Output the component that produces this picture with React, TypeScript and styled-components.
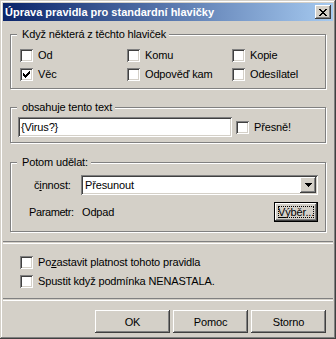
import * as React from 'react';
import styled, { createGlobalStyle } from 'styled-components';

const face = '#D4D0C8';
const shadow = '#808080';
const dark = '#404040';

const GlobalStyle = createGlobalStyle`
  html, body {
    margin: 0;
    padding: 0;
    background: ${face};
  }
  body {
    font-family: "Liberation Sans", Arial, sans-serif;
    font-size: 11px;
    letter-spacing: -0.15px;
    color: #000;
  }
`;

const raised = `
  box-shadow: inset -1px -1px ${dark}, inset 1px 1px #fff,
    inset -2px -2px ${shadow}, inset 2px 2px ${face};
`;

const sunken = `
  box-shadow: inset 1px 1px ${shadow}, inset -1px -1px #fff,
    inset 2px 2px ${dark}, inset -2px -2px ${face};
`;

export default () => {
  return (
    <>
      <GlobalStyle />
      <Window>
        <TitleBar>
          <Title>Úprava pravidla pro standardní hlavičky</Title>
          <CloseButton>
            <svg width="8" height="7" viewBox="0 0 8 7" shapeRendering="crispEdges">
              <path
                d="M0 0h2v1H0zM6 0h2v1H6zM1 1h2v1H1zM5 1h2v1H5zM2 2h4v1H2zM3 3h2v1H3zM2 4h4v1H2zM1 5h2v1H1zM5 5h2v1H5zM0 6h2v1H0zM6 6h2v1H6z"
                fill="#000"
              />
            </svg>
          </CloseButton>
        </TitleBar>

        <Groups>
          <Group>
            <Legend>Když některá z těchto hlaviček</Legend>
            <HeaderGrid>
              <Check label="Od" />
              <Check label="Komu" />
              <Check label="Kopie" />
              <Check label="Věc" checked />
              <Check label="Odpověď kam" />
              <Check label="Odesílatel" />
            </HeaderGrid>
          </Group>

          <Group $top={12}>
            <Legend>obsahuje tento text</Legend>
            <TextRow>
              <Edit>{'{Virus?}'}</Edit>
              <Check label="Přesně!" />
            </TextRow>
          </Group>

          <Group $top={13}>
            <Legend>Potom udělat:</Legend>
            <ActionBody>
              <FieldRow $indent={23}>
                <Caption $width={47}>
                  č<u>i</u>nnost:
                </Caption>
                <Combo>
                  <ComboText>Přesunout</ComboText>
                  <DropButton>
                    <svg width="7" height="4" viewBox="0 0 7 4" shapeRendering="crispEdges">
                      <path d="M0 0h7v1H0zM1 1h5v1H1zM2 2h3v1H2zM3 3h1v1H3z" fill="#000" />
                    </svg>
                  </DropButton>
                </Combo>
              </FieldRow>
              <FieldRow $indent={18}>
                <Caption $width={53} $narrow>
                  Parametr:
                </Caption>
                <Value>Odpad</Value>
                <DefaultButton>
                  <Focus>
                    <u>V</u>ýběr...
                  </Focus>
                </DefaultButton>
              </FieldRow>
            </ActionBody>
          </Group>
        </Groups>

        <Separator $top={9} />

        <Options>
          <Check label={<>Po<u>z</u>astavit platnost tohoto pravidla</>} />
          <Check label="Spustit když podmínka NENASTALA." />
        </Options>

        <Separator />

        <Footer>
          <PushButton>OK</PushButton>
          <PushButton>Pomoc</PushButton>
          <PushButton>Storno</PushButton>
        </Footer>
      </Window>
    </>
  );
};

const Check = ({ label, checked }: { label: React.ReactNode; checked?: boolean }) => (
  <CheckRow>
    <Box>
      {checked && (
        <svg width="7" height="7" viewBox="0 0 7 7" shapeRendering="crispEdges">
          <path
            d="M6 0h1v1H6zM5 1h2v1H5zM0 2h1v1H0zM4 2h3v1H4zM0 3h2v1H0zM3 3h3v1H3zM0 4h5v1H0zM1 5h3v1H1zM2 6h1v1H2z"
            fill="#000"
          />
        </svg>
      )}
    </Box>
    <span>{label}</span>
  </CheckRow>
);

const Window = styled.div`
  width: 336px;
  height: 339px;
  box-sizing: border-box;
  padding: 3px;
  background: ${face};
  box-shadow: inset -1px -1px ${dark}, inset 1px 1px ${face},
    inset -2px -2px ${shadow}, inset 2px 2px #fff;
  display: flex;
  flex-direction: column;
`;

const TitleBar = styled.div`
  height: 18px;
  flex: none;
  display: flex;
  align-items: center;
  padding: 0 2px 0 2px;
  background: linear-gradient(to right, #0a246a, #a6caf0);
`;

const Title = styled.div`
  color: #fff;
  font-weight: bold;
  font-size: 11px;
  letter-spacing: 0;
  white-space: nowrap;
`;

const CloseButton = styled.div`
  margin-left: auto;
  width: 16px;
  height: 14px;
  display: flex;
  align-items: center;
  justify-content: center;
  background: ${face};
  ${raised}
`;

const Groups = styled.div`
  padding: 7px 7px 0 7px;
  display: flex;
  flex-direction: column;
`;

const Group = styled.fieldset<{ $top?: number }>`
  margin: ${(p) => p.$top || 0}px 0 0 0;
  padding: 0;
  min-width: 0;
  width: 316px;
  box-sizing: border-box;
  border: 1px solid ${shadow};
  box-shadow: 1px 1px 0 #fff, inset 1px 1px 0 #fff;
`;

const Legend = styled.legend`
  margin-left: 6px;
  padding: 0 3px 0 5px;
  height: 13px;
  line-height: 13px;
  background: ${face};
`;

const HeaderGrid = styled.div`
  display: grid;
  grid-template-columns: 107px 105px 1fr;
  row-gap: 6px;
  padding: 8px 0 7px 9px;
`;

const CheckRow = styled.label`
  display: flex;
  align-items: center;
  gap: 5px;
  height: 13px;
  line-height: 13px;
  white-space: nowrap;
`;

const Box = styled.span`
  width: 13px;
  height: 13px;
  flex: none;
  box-sizing: border-box;
  background: #fff;
  display: flex;
  align-items: center;
  justify-content: center;
  ${sunken}
`;

const TextRow = styled.div`
  display: flex;
  align-items: center;
  gap: 4px;
  padding: 3px 0 5px 7px;
`;

const Edit = styled.div`
  width: 214px;
  height: 20px;
  box-sizing: border-box;
  padding: 0 3px;
  background: #fff;
  display: flex;
  align-items: center;
  ${sunken}
`;

const ActionBody = styled.div`
  display: flex;
  flex-direction: column;
  gap: 7px;
  padding: 6px 7px 9px 0;
`;

const FieldRow = styled.div<{ $indent: number }>`
  display: flex;
  align-items: center;
  padding-left: ${(p) => p.$indent}px;
`;

const Caption = styled.span<{ $width: number; $narrow?: boolean }>`
  width: ${(p) => p.$width}px;
  flex: none;
  letter-spacing: ${(p) => (p.$narrow ? '-0.4px' : 'inherit')};
`;

const Combo = styled.div`
  flex: 1;
  height: 20px;
  box-sizing: border-box;
  padding: 2px;
  background: #fff;
  display: flex;
  ${sunken}
`;

const ComboText = styled.div`
  flex: 1;
  display: flex;
  align-items: center;
  padding-left: 2px;
`;

const DropButton = styled.div`
  width: 16px;
  height: 16px;
  display: flex;
  align-items: center;
  justify-content: center;
  background: ${face};
  ${raised}
`;

const Value = styled.span`
  flex: 1;
`;

const DefaultButton = styled.div`
  width: 44px;
  height: 20px;
  box-sizing: border-box;
  border: 1px solid #000;
  padding: 3px;
  background: ${face};
  display: flex;
  ${raised}
`;

const Focus = styled.span`
  flex: 1;
  display: flex;
  align-items: center;
  justify-content: center;
  outline: 1px dotted #000;
  outline-offset: -1px;
`;

const Separator = styled.div<{ $top?: number }>`
  margin-top: ${(p) => p.$top || 0}px;
  height: 1px;
  border-top: 1px solid ${shadow};
  border-bottom: 1px solid #fff;
`;

const Options = styled.div`
  display: flex;
  flex-direction: column;
  gap: 6px;
  padding: 12px 0 10px 17px;
`;

const Footer = styled.div`
  display: flex;
  justify-content: flex-end;
  gap: 3px;
  padding: 9px 7px 0 0;
`;

const PushButton = styled.div`
  width: 75px;
  height: 23px;
  box-sizing: border-box;
  display: flex;
  align-items: center;
  justify-content: center;
  background: ${face};
  ${raised}
`;
